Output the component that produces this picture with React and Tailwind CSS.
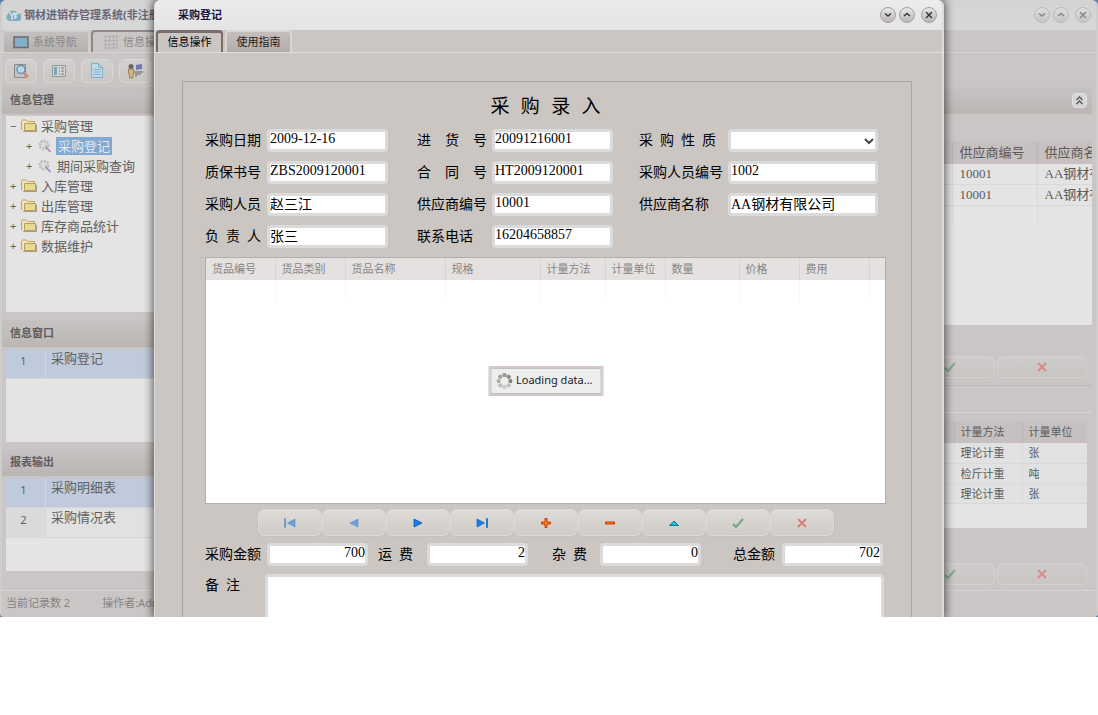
import { useState } from "react";

const UI = "font-['Noto_Sans','Noto_Sans_CJK_SC',sans-serif]";
const SONG = "font-['Liberation_Serif','Noto_Sans_CJK_SC',serif]";

const gridColumns = [
  { label: "货品编号", width: 69 },
  { label: "货品类别", width: 70 },
  { label: "货品名称", width: 100 },
  { label: "规格", width: 95 },
  { label: "计量方法", width: 65 },
  { label: "计量单位", width: 60 },
  { label: "数量", width: 74 },
  { label: "价格", width: 60 },
  { label: "费用", width: 70 },
  { label: "", width: null },
];

const menu = [
  { label: "采购管理", open: true },
  { label: "采购登记", child: true, selected: true },
  { label: "期间采购查询", child: true },
  { label: "入库管理" },
  { label: "出库管理" },
  { label: "库存商品统计" },
  { label: "数据维护" },
];

const suppliers = [
  ["10001", "AA钢材有限公司"],
  ["10001", "AA钢材有限公司"],
];

const units = [
  ["理论计重", "张"],
  ["检斤计重", "吨"],
  ["理论计重", "张"],
];

function FolderIcon() {
  return (
    <svg viewBox="0 0 16 14" className="h-[14px] w-4 shrink-0">
      <path d="M.5 11V2.500l1-1.500h4l1.500 1.500h6.500V5" fill="#efe6bd" stroke="#c0a368" />
      <path d="M3.500 4.500h11v7h-11z" fill="#e6da94" stroke="#bb9c5c" />
      <path d="M2 12.500h13.500V6" fill="none" stroke="#a19c90" />
    </svg>
  );
}

function WandIcon() {
  return (
    <svg viewBox="0 0 16 16" className="h-4 w-4 shrink-0">
      <circle cx="7" cy="7" r="4" fill="none" stroke="#bcbcbc" strokeWidth="3" strokeDasharray="2 1" />
      <path d="M6 7l3-3 2 2-3 3z" fill="#d4d4d4" />
      <path d="M8.500 8.500l5 5.500" stroke="#a884c2" strokeWidth="1.600" />
    </svg>
  );
}

function CheckIcon() {
  return (
    <svg viewBox="0 0 12 12" className="h-3 w-3">
      <path d="M1 7l3 3 7-8" fill="none" stroke="#71a883" strokeWidth="2" />
    </svg>
  );
}

function CrossIcon() {
  return (
    <svg viewBox="0 0 12 12" className="h-3 w-3">
      <path d="M2 2l8 8M10 2l-8 8" fill="none" stroke="#d9807a" strokeWidth="2" />
    </svg>
  );
}

function NavIcon({ name }) {
  if (name === "save") return <CheckIcon />;
  if (name === "cancel") return <CrossIcon />;
  return (
    <svg viewBox="0 0 12 12" className="h-3 w-3">
      {name === "first" && (
        <g fill="#6ba0dc" stroke="#5089cc" strokeWidth=".6">
          <path d="M.5 1.500h1v9h-1zM11 2v8L3.500 6z" />
        </g>
      )}
      {name === "prev" && <path d="M10 2v8L2 6z" fill="#6ba0dc" stroke="#5089cc" strokeWidth=".6" />}
      {name === "next" && <path d="M2 2v8l8-4z" fill="#1a7fe8" stroke="#0450b8" strokeWidth=".8" />}
      {name === "last" && (
        <g fill="#1a7fe8" stroke="#0450b8" strokeWidth=".6">
          <path d="M10.500 1.500h1v9h-1zM1 2v8l7.500-4z" />
        </g>
      )}
      {name === "add" && (
        <path d="M5 1.500h2V5h3.500v2H7v3.500H5V7H1.500V5H5z" fill="#ff8a1c" stroke="#cc3300" />
      )}
      {name === "remove" && <path d="M1.500 5h9v2h-9z" fill="#ff8a1c" stroke="#cc3300" />}
      {name === "edit" && <path d="M1.500 8.500h9L6 4z" fill="#22bcd0" stroke="#087f92" />}
    </svg>
  );
}

function WindowButtons({ dim }) {
  const shapes = [
    ["最小化", "M5 6.500l3 2.500 3-2.500"],
    ["最大化", "M5 9l3-2.500L11 9"],
    ["关闭", "M5 5l6 6M11 5l-6 6"],
  ];
  return (
    <div className={`flex items-center ${dim ? "opacity-50" : ""}`}>
      {shapes.map(([label, d]) => (
        <button
          key={label}
          aria-label={label}
          className="mr-[3px] h-4 w-4 rounded-full border border-[#a3a09e] bg-linear-to-b from-[#eaeaea] to-[#b9b6b4] last:mr-0 last:ml-[3px]"
        >
          <svg viewBox="0 0 16 16" className="-m-px h-4 w-4">
            <path d={d} fill="none" stroke="#3a3a3a" strokeWidth="1.600" />
          </svg>
        </button>
      ))}
    </div>
  );
}

function ToolButton({ label, children }) {
  return (
    <button
      aria-label={label}
      className="flex h-6 w-8 items-center justify-center rounded-md border border-[#dad8d7] bg-linear-to-b from-[#d2d0cf] to-[#cac7c5]"
    >
      <svg viewBox="0 0 16 16" className="h-4 w-4">
        {children}
      </svg>
    </button>
  );
}

function PanelTitle({ children }) {
  return (
    <h2 className="flex h-[27px] items-center bg-linear-to-b from-[#c5c3c2] to-[#bbb6b4] pl-2 text-[11px] font-bold text-[#5e5c5c]">
      {children}
    </h2>
  );
}

function ListPanel({ rows, selected }) {
  return (
    <ul className="mt-0.5 ml-1 h-[93px] bg-[#e4e4e4]">
      {rows.map((row, i) => (
        <li
          key={row}
          className={`flex h-[30px] border-b border-[#d6d6d6] ${i === selected ? "bg-[#bfcbdc]" : "bg-[#e1e1e1]"}`}
        >
          <span
            className={`w-10 border-r border-[#d8d8d8] pt-1 pr-1 text-center text-[11px] text-[#606060] ${i === selected ? "" : "bg-[#dadada]"}`}
          >
            {i + 1}
          </span>
          <span className="pl-[5px] text-[13px] text-[#606060]">{row}</span>
        </li>
      ))}
    </ul>
  );
}

function Sidebar() {
  return (
    <aside className="w-[200px] shrink-0">
      <PanelTitle>信息管理</PanelTitle>
      <ul className="mt-0.5 ml-1 h-[196px] bg-[#e4e4e4] text-[13px] text-[#5f5f5f]">
        {menu.map((item) => (
          <li key={item.label} className={`flex h-5 items-center ${item.child ? "pl-5" : "pl-1"}`}>
            <span className="w-[11px] text-[11px] leading-5">{item.open ? "−" : "+"}</span>
            {item.child ? <WandIcon /> : <FolderIcon />}
            <span
              className={`leading-[18px] ${item.selected ? "ml-[3px] bg-[#82a9d2] px-0.5 text-[#e4ebf2]" : "ml-1"}`}
            >
              {item.label}
            </span>
          </li>
        ))}
      </ul>
      <div className="mt-2">
        <PanelTitle>信息窗口</PanelTitle>
        <ListPanel rows={["采购登记"]} selected={0} />
      </div>
      <div className="mt-[7px]">
        <PanelTitle>报表输出</PanelTitle>
        <ListPanel rows={["采购明细表", "采购情况表"]} selected={0} />
      </div>
    </aside>
  );
}

function ConfirmButtons() {
  return (
    <div className="flex justify-end gap-0.5">
      {["保存", "取消"].map((label, i) => (
        <button
          key={label}
          aria-label={label}
          className="flex h-[22px] w-[90px] items-center justify-center rounded-md border border-[#d7d5d4] bg-linear-to-b from-[#d0cecd] to-[#c8c5c3] opacity-80"
        >
          {i === 0 ? <CheckIcon /> : <CrossIcon />}
        </button>
      ))}
    </div>
  );
}

function MainArea() {
  return (
    <main className="min-w-0 flex-1 pr-1">
      <div className="flex h-[27px] items-center justify-end bg-linear-to-b from-[#c5c3c2] to-[#bbb6b4] pr-[5px]">
        <button
          aria-label="折叠"
          className="h-[15px] w-[15px] rounded-sm border border-[#e2e2e2] bg-[#d6d6d6]"
        >
          <svg viewBox="0 0 13 13" className="h-[13px] w-[13px]">
            <path d="M3.500 6l3-3 3 3M3.500 10l3-3 3 3" fill="none" stroke="#555" strokeWidth="1.300" />
          </svg>
        </button>
      </div>

      <div className="mt-[27px] h-[184px] bg-[#e4e4e4]">
        <table className={`w-full table-fixed text-left text-[13px] text-[#5a5a5a] ${SONG}`}>
          <colgroup>
            <col />
            <col className="w-[85px]" />
            <col className="w-[55px]" />
          </colgroup>
          <thead>
            <tr className="h-[23px] bg-[#c6c1c0] leading-5">
              <th />
              <th className="border-l border-[#bab6b5] pl-[7px] font-normal">供应商编号</th>
              <th className="overflow-hidden border-l border-[#bab6b5] pl-[7px] font-normal whitespace-nowrap">
                供应商名称
              </th>
            </tr>
          </thead>
          <tbody>
            {suppliers.map(([code, name], i) => (
              <tr key={i} className="h-5 border-b border-[#d9d9d9] leading-5">
                <td />
                <td className="border-l border-[#d9d9d9] pl-[7px]">{code}</td>
                <td className="overflow-hidden border-l border-[#d9d9d9] pl-[7px] whitespace-nowrap">{name}</td>
              </tr>
            ))}
            <tr className="h-5">
              <td />
              <td className="border-l border-[#dcdcdc]" />
              <td className="border-l border-[#dcdcdc]" />
            </tr>
          </tbody>
        </table>
      </div>
      <div className="border-b border-[#bcb8b7] pt-[31px] pr-[5px] pb-[7px]">
        <ConfirmButtons />
      </div>

      <div className="mt-[26px] border-t border-[#d8d5d4] pt-2 pr-[5px]">
        <div className="h-[107px] bg-[#e4e4e4]">
          <table className="w-full table-fixed text-left text-[11px] text-[#5a5a5a]">
            <colgroup>
              <col />
              <col className="w-[68px]" />
              <col className="w-[65px]" />
            </colgroup>
            <thead>
              <tr className="h-[22px] bg-[#c6c1c0] leading-5">
                <th />
                <th className="border-l border-[#bab6b5] pl-[6px] font-normal">计量方法</th>
                <th className="border-l border-[#bab6b5] pl-[6px] font-normal">计量单位</th>
              </tr>
            </thead>
            <tbody>
              {units.map(([method, unit], i) => (
                <tr key={i} className="h-5 border-b border-[#d9d9d9] bg-[#e1e1e1] leading-[19px]">
                  <td />
                  <td className="border-l border-[#d9d9d9] pl-[6px]">{method}</td>
                  <td className="border-l border-[#d9d9d9] pl-[6px]">{unit}</td>
                </tr>
              ))}
            </tbody>
          </table>
        </div>
        <div className="pt-[35px]">
          <ConfirmButtons />
        </div>
      </div>
    </main>
  );
}

function Field({ id, label, defaultValue, wide, right }) {
  return (
    <>
      <label htmlFor={id} className="pt-px whitespace-pre">
        {label}
      </label>
      <input
        id={id}
        defaultValue={defaultValue}
        className={`h-[23px] rounded border-[3px] border-[#dbdbdb] bg-white pb-[3px] leading-[14px] outline-none ${
          wide ? "w-[150px]" : right ? "w-[101px] text-right" : "w-[121px]"
        }`}
      />
    </>
  );
}

function LoadingBox() {
  return (
    <div className="absolute top-1/2 left-1/2 -translate-x-1/2 -translate-y-1/2 border-2 border-[#d3cac8] bg-[#d3cac8]">
      <div className="flex h-[26px] w-[111px] items-center border border-[#c4c0be] bg-[#eeeeee] pl-[5px] text-[11px] whitespace-nowrap text-[#222]">
        <svg viewBox="0 0 16 16" className="mr-1 h-4 w-4 shrink-0">
          {[0, 45, 90, 135, 180, 225, 270, 315].map((deg, i) => (
            <rect
              key={deg}
              x="6"
              y="0"
              width="4"
              height="4"
              rx="1.500"
              fill="#85807a"
              opacity={[0.8, 0.9, 1, 0.4, 0.35, 0.45, 0.6, 0.7][i]}
              transform={`rotate(${deg} 8 8)`}
            />
          ))}
        </svg>
        Loading data...
      </div>
    </div>
  );
}

function ItemGrid() {
  return (
    <div className="relative h-[247px] border border-[#b3aeac] bg-white">
      <table className="w-full table-fixed text-left text-[11px] text-[#858585]">
        <colgroup>
          {gridColumns.map((col, i) => (
            <col key={i} style={col.width ? { width: col.width } : undefined} />
          ))}
        </colgroup>
        <thead>
          <tr className="h-[22px] bg-[#e5e1e0]">
            {gridColumns.map((col, i) => (
              <th key={i} className="border-r border-[#d8d4d3] pl-[6px] font-normal last:border-r-0">
                {col.label}
              </th>
            ))}
          </tr>
        </thead>
        <tbody>
          <tr className="h-5">
            {gridColumns.map((col, i) => (
              <td key={i} className="border-r border-[#f6f6f6] last:border-r-0" />
            ))}
          </tr>
        </tbody>
      </table>
      <LoadingBox />
    </div>
  );
}

function PurchaseDialog() {
  const [tab, setTab] = useState("信息操作");
  const navButtons = [
    ["first", "首条"],
    ["prev", "上一条"],
    ["next", "下一条"],
    ["last", "末条"],
    ["add", "新增"],
    ["remove", "删除"],
    ["edit", "编辑"],
    ["save", "保存"],
    ["cancel", "取消"],
  ];

  return (
    <section
      role="dialog"
      aria-label="采购登记"
      className="absolute inset-x-[154px] inset-y-0 overflow-hidden rounded-t-md border-r-2 border-l border-[#e0dedd] bg-[#ccc6c3] shadow-[0_0_9px_2px_rgba(0,0,0,0.55)]"
    >
      <header className="flex h-[30px] items-center justify-between bg-linear-to-b from-[#ececeb] to-[#e4e4e4] pr-[5px] pl-[23px]">
        <h1 className="text-[11px] font-bold text-[#15153c]">采购登记</h1>
        <WindowButtons />
      </header>

      <div className="flex h-[23px] items-end gap-0.5 border-b border-[#e2dfdd] pl-px">
        {["信息操作", "使用指南"].map((name) => (
          <button
            key={name}
            onClick={() => setTab(name)}
            className={`h-[22px] w-[67px] rounded-t border-2 border-b-0 text-[11px] ${
              tab === name
                ? "border-t-[3px] border-[#7a6b6c] bg-[#ccc6c3] text-black"
                : "border-[#d9d6d5] bg-linear-to-b from-[#c4bfbd] to-[#b2acaa] text-[#222]"
            }`}
          >
            {name}
          </button>
        ))}
      </div>

      <div className="pt-7 pr-[30px] pl-[27px]">
        <form className={`border border-[#aaa5a3] pt-[14px] pr-[25px] pb-6 pl-[22px] text-[14px] text-black ${SONG}`}>
          <h2 className="text-center font-['Liberation_Mono','Noto_Sans_CJK_SC',monospace] text-[19px] leading-6">
            采 购 录 入
          </h2>

          <div className="mt-2 grid grid-cols-[62px_150px_75px_147px_89px_150px] items-center gap-y-2 leading-[23px]">
            <Field id="date" label="采购日期" defaultValue="2009-12-16" />
            <Field id="receipt" label="进    货    号" defaultValue="20091216001" />
            <label htmlFor="kind" className="pt-px whitespace-pre">
              采  购  性  质
            </label>
            <span className="relative">
              <select
                id="kind"
                className="block h-[23px] w-[150px] appearance-none rounded border-[3px] border-[#dbdbdb] bg-white outline-none"
              >
                <option></option>
              </select>
              <svg viewBox="0 0 10 10" className="pointer-events-none absolute top-[7px] right-1 h-[10px] w-[10px]">
                <path d="M1 3l4 4 4-4" fill="none" stroke="#444" strokeWidth="2" />
              </svg>
            </span>
            <Field id="warranty" label="质保书号" defaultValue="ZBS2009120001" />
            <Field id="contract" label="合    同    号" defaultValue="HT2009120001" />
            <Field id="buyerCode" label="采购人员编号" defaultValue="1002" wide />
            <Field id="buyer" label="采购人员" defaultValue="赵三江" />
            <Field id="supplierCode" label="供应商编号" defaultValue="10001" />
            <Field id="supplier" label="供应商名称" defaultValue="AA钢材有限公司" wide />
            <Field id="owner" label="负  责  人" defaultValue="张三" />
            <Field id="phone" label="联系电话" defaultValue="16204658857" />
          </div>

          <div className={`mt-[9px] ${UI}`}>
            <ItemGrid />
          </div>

          <div className="mt-[5px] flex justify-center">
            {navButtons.map(([icon, label]) => (
              <button
                key={icon}
                type="button"
                aria-label={label}
                className="flex h-[27px] w-16 items-center justify-center rounded-md border border-[#dddad8] bg-linear-to-b from-[#dedbd8] to-[#cfccc7] shadow-[0_0_1px_#9d9894]"
              >
                <NavIcon name={icon} />
              </button>
            ))}
          </div>

          <div className="mt-[6px] grid grid-cols-[62px_111px_49px_125px_48px_133px_49px_101px] items-center leading-[23px]">
            <Field id="amount" label="采购金额" defaultValue="700" right />
            <Field id="freight" label="运  费" defaultValue="2" right />
            <Field id="extra" label="杂  费" defaultValue="0" right />
            <Field id="total" label="总金额" defaultValue="702" right />
          </div>

          <div className="mt-2 flex pr-0.5">
            <label htmlFor="remark" className="w-[60px] leading-6 whitespace-pre">
              备  注
            </label>
            <textarea
              id="remark"
              className="h-20 flex-1 resize-none rounded border-[3px] border-[#dbdbdb] bg-white outline-none"
            />
          </div>
        </form>
      </div>
    </section>
  );
}

export default function App() {
  return (
    <div className={`relative bg-[#5a7fa6] ${UI}`}>
      <div className="overflow-hidden rounded-t-md rounded-b border-x-2 border-[#cfcdcc] bg-[#cac6c5]">
        <header className="flex h-[30px] items-center justify-between bg-linear-to-b from-[#d3d3d2] to-[#d9d8d8] pr-[5px] pl-[3px]">
          <div className="flex items-center gap-[3px] text-[11px] font-bold text-[#686677]">
            <svg viewBox="0 0 16 14" className="h-[14px] w-4">
              <path d="M4 13a4 4 0 01-1-7 5 5 0 019-1 4 4 0 011 8z" fill="#7fa9bd" />
              <path d="M4.500 4l2.500 4 2.500-4M7 8v4M10 11V6h3M10 8.500h2" fill="none" stroke="#dfe8ea" strokeWidth="1.400" />
            </svg>
            钢材进销存管理系统(非注册)
          </div>
          <WindowButtons dim />
        </header>

        <nav className="flex h-[23px] items-end gap-px border-b border-[#d6d3d2] text-[11px] text-[#8a8888]">
          <button className="flex h-[22px] w-[88px] items-center rounded-t border-2 border-b-0 border-[#d0cecd] bg-linear-to-b from-[#c3c0bf] to-[#b4b0ae] pl-[9px]">
            <svg viewBox="0 0 16 13" className="mr-1 h-[13px] w-4">
              <path d="M1 1h14v10.500H1z" fill="#80afc7" stroke="#6b6b6b" strokeWidth="1.500" />
            </svg>
            系统导航
          </button>
          <button className="flex h-[22px] w-[88px] items-center rounded-t border-2 border-b-0 border-[#8f8788] pl-[10px]">
            <svg viewBox="0 0 16 16" className="mr-1 h-4 w-4">
              <path
                d="M2.500 1v14M6.500 1v14M10.500 1v14M14 1v14M1 2.500h14M1 6.500h14M1 10.500h14M1 14h14"
                stroke="#b1afaf"
              />
            </svg>
            信息操作
          </button>
        </nav>

        <div className="flex h-[34px] items-center gap-[6px] pt-0.5 pl-[3px]">
          <ToolButton label="查询">
            <path d="M1.500 1.500h11v13h-11z" fill="#c3c5c6" stroke="#888" />
            <circle cx="8" cy="6.500" r="4" fill="#b9dbe9" stroke="#6b93b3" strokeWidth="1.500" />
            <path d="M11 10l4 4" stroke="#d28a6a" strokeWidth="3" />
          </ToolButton>
          <ToolButton label="列表">
            <path d="M1.500 2.500h13v11h-13z" fill="#d5d5d5" stroke="#999" />
            <path d="M3 4h3v8H3z" fill="#7aa7bf" />
            <path d="M8 5h1M10 5h3M8 8h1M10 8h3M8 11h1M10 11h3" stroke="#777" />
          </ToolButton>
          <ToolButton label="文档">
            <path d="M2.500.5h7l4 4v10h-11z" fill="#bdd9eb" stroke="#85aecb" />
            <path d="M9.500.5v4h4M4.500 6.500h7M4.500 9h7M4.500 11.500h7" fill="none" stroke="#85aecb" />
          </ToolButton>
          <ToolButton label="用户">
            <circle cx="4" cy="3.500" r="2.500" fill="#666" />
            <path d="M1.500 6h5v5H6v4H2.500v-4h-1z" fill="#d6b779" stroke="#7c6846" strokeWidth=".7" />
            <path d="M9 2l6-1v5l-6 1z" fill="#7076b8" />
            <path d="M7 9h9M8 11h6M9 11v3" stroke="#888" strokeWidth="1.500" />
          </ToolButton>
        </div>

        <div className="flex">
          <Sidebar />
          <MainArea />
        </div>

        <footer className="mt-[5px] flex h-[27px] items-center gap-8 border-t border-[#d6d3d2] pb-0.5 pl-1 text-[11px] text-[#858383]">
          <span>当前记录数 2</span>
          <span>操作者:Admin</span>
        </footer>
      </div>

      <PurchaseDialog />
    </div>
  );
}
